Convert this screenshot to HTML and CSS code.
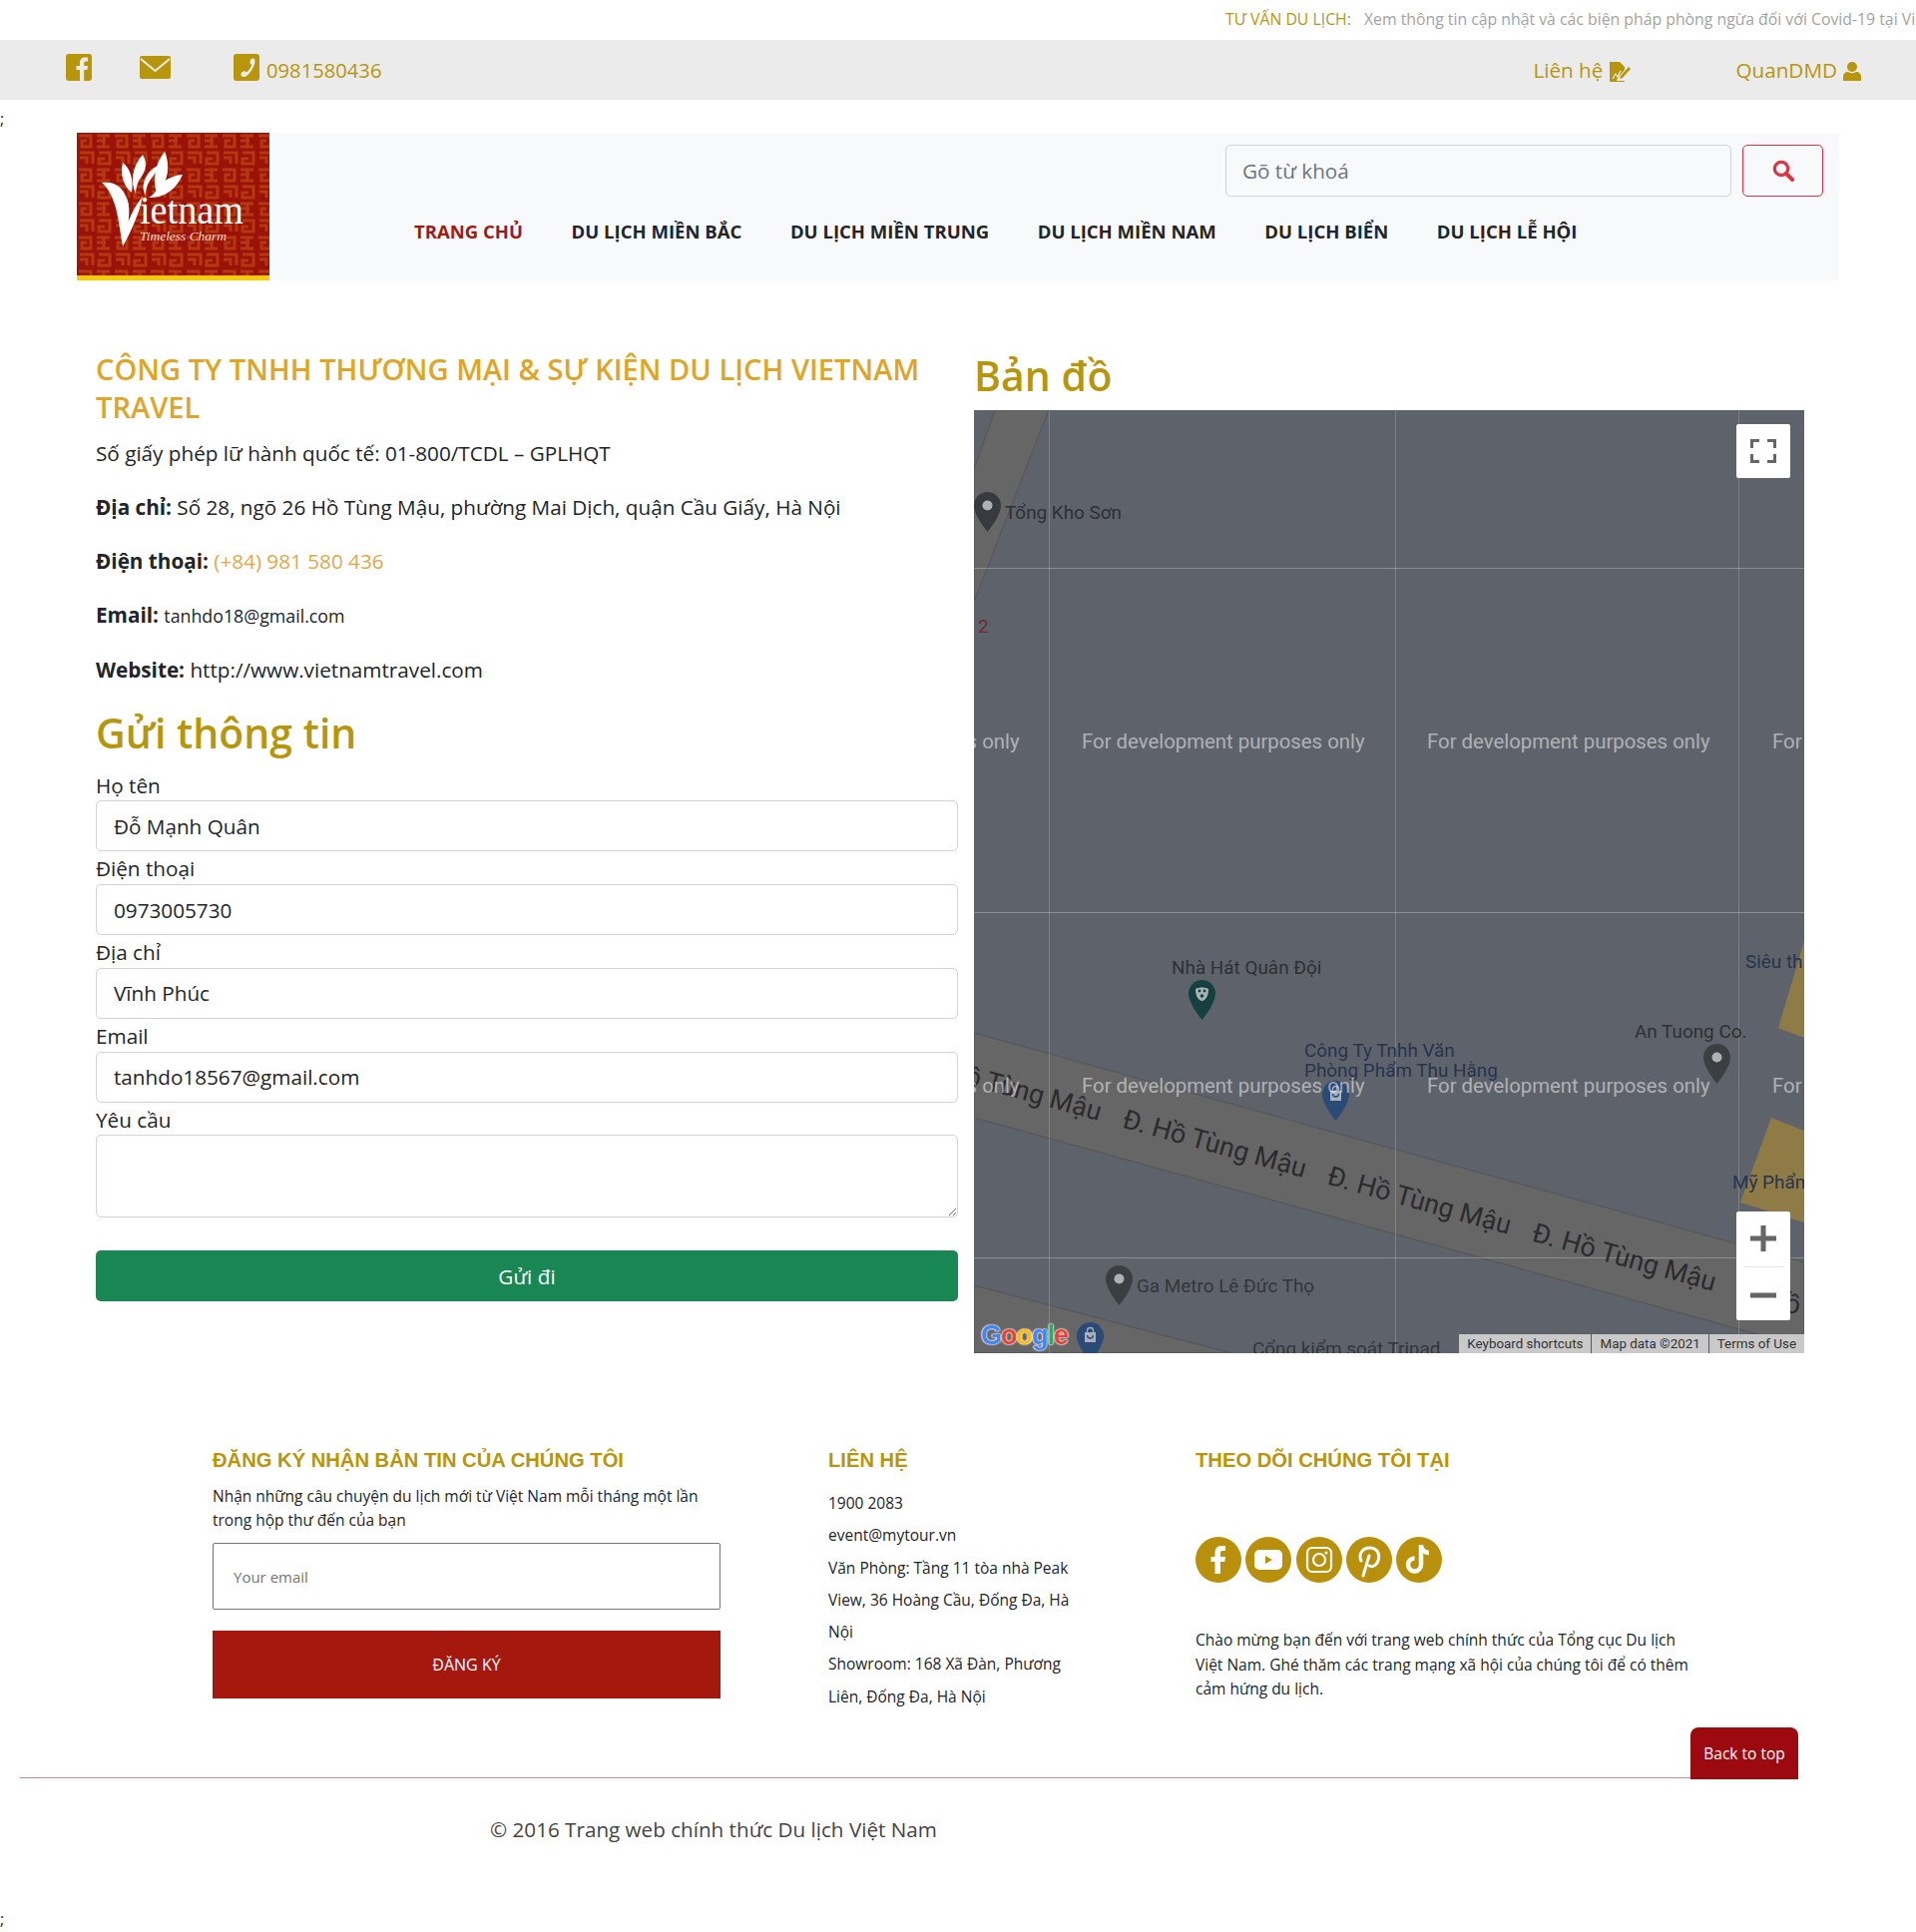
FILE: index.html
```html
<!DOCTYPE html>
<html lang="vi">

<head>
  <meta charset="UTF-8">
  <meta name="viewport" content="width=device-width, initial-scale=1.0">
  <title>Liên hệ - Du lịch Việt Nam</title>
  <link rel="stylesheet" href="styles.css">
</head>

<body>
  <svg class="defs" width="0" height="0">
    <defs>
      <symbol id="pin" viewBox="0 0 27 40">
        <path d="M13.5 0C6 0 0 6 0 13.5 0 24 13.5 40 13.5 40S27 24 27 13.5C27 6 21 0 13.5 0z" fill="currentColor" />
        <circle cx="13.5" cy="13.5" r="5" fill="#aeb1b5" />
      </symbol>
      <symbol id="pin-theatre" viewBox="0 0 27 40">
        <path d="M13.5 0C6 0 0 6 0 13.5 0 24 13.5 40 13.5 40S27 24 27 13.5C27 6 21 0 13.5 0z" fill="currentColor" />
        <path d="M7 9c4-2 9-2 13 0 0 6-2 11-6.500 12C9 20 7 15 7 9z" fill="#a9b3b3" />
        <circle cx="11" cy="11" r="1.400" fill="currentColor" />
        <circle cx="16" cy="11" r="1.400" fill="currentColor" />
        <circle cx="13.500" cy="16" r="1.800" fill="currentColor" />
      </symbol>
      <symbol id="pin-shop" viewBox="0 0 27 40">
        <path d="M13.5 0C6 0 0 6 0 13.5 0 24 13.5 40 13.5 40S27 24 27 13.5C27 6 21 0 13.5 0z" fill="currentColor" />
        <path d="M8 10h11v10H8z" fill="#a9b0bb" />
        <path d="M10.500 10V8.500a3 3 0 0 1 6 0V10M10.500 13a3 3 0 0 0 6 0" fill="none" stroke="#a9b0bb" stroke-width="1.300" />
        <path d="M10.500 13a3 3 0 0 0 6 0" fill="none" stroke="currentColor" stroke-width="1.300" />
      </symbol>
    </defs>
  </svg>

  <div class="top-strip">
    <span class="strip-label">TƯ VẤN DU LỊCH:</span>
    <span class="strip-text">Xem thông tin cập nhật và các biện pháp phòng ngừa đối với Covid-19 tại Việt Nam</span>
  </div>

  <div class="top-bar">
    <div class="bar-left">
      <svg class="icon-fb" viewBox="0 0 26 27">
        <rect width="26" height="27" rx="3" fill="#b8960c" />
        <path d="M14 27V16h-3.500v-4H14V9c0-3.500 2-5.500 5.200-5.500H22v4h-1.800c-1.500 0-2 .7-2 2V12H22l-.6 4h-3.200v11z" fill="#ebebeb" />
      </svg>
      <svg class="icon-mail" viewBox="0 0 31 23">
        <rect width="31" height="23" rx="2" fill="#b8960c" />
        <path d="M1 3l14.500 12L30 3" fill="none" stroke="#ebebeb" stroke-width="2" />
      </svg>
      <svg class="icon-phone" viewBox="0 0 26 27">
        <rect width="26" height="27" rx="3" fill="#b8960c" />
        <path d="M20 4.500c-.8 0-2.800.7-3 1.200l-.6 3.200c0 .5 1.400 1.400 1.600 2 .1 1.500-3.500 7-5 7.400-.7 0-1.700-1.200-2.200-1.200l-3 1.600c-.4.400-.4 2.500 0 3.200C9 23.500 11 23.300 12.500 22.400 17 19.600 21.500 12 21.500 7c0-1-.6-2.500-1.500-2.500z" fill="#ebebeb" />
      </svg>
      <span class="bar-phone">0981580436</span>
    </div>
    <div class="bar-right">
      <a class="bar-link bar-contact">Liên hệ
        <svg class="icon-edit" viewBox="0 0 22 20">
          <path d="M1 0h10l5 5v3l-7 8-1 3h8v1H1z" fill="#b8960c" />
          <path d="M4 17l3-5 2 3 3-6" fill="none" stroke="#ebebeb" stroke-width="1.200" />
          <path d="M12 14l8-9 2 2-8 9-3 1z" fill="#b8960c" />
        </svg>
      </a>
      <a class="bar-link bar-user">QuanDMD
        <svg class="icon-user" viewBox="0 0 18 19">
          <circle cx="9" cy="5" r="5" fill="#b8960c" />
          <path d="M0 19v-4c0-3 2-5 5-5 2.500 1.600 5.500 1.600 8 0 3 0 5 2 5 5v4z" fill="#b8960c" />
        </svg>
      </a>
    </div>
  </div>

  <div class="stray">;</div>

  <header class="site-header">
    <svg class="logo" viewBox="0 0 193 148" role="img" aria-label="Vietnam Timeless Charm">
      <defs>
        <pattern id="key" width="36" height="34" patternUnits="userSpaceOnUse">
          <path d="M2 3h12v11H5V8h5M20 3h13M20 8h9M20 14h13M27 3v11M3 20h13v11M3 25h7v6M22 20h11v11H22v-5h6" fill="none" stroke="#b6380f" stroke-width="3" />
        </pattern>
      </defs>
      <rect width="193" height="148" fill="#9a1208" />
      <rect width="193" height="143" fill="url(#key)" />
      <rect y="143" width="193" height="5" fill="#fbca00" />
      <path d="M46 30c8 6 11 18 9 30-8-6-12-18-9-30zM66 22c6 10 2 18-4 26-2 5-3 9-3 13-6-12-3-28 7-39zM81 33c-2 12-12 14-12 30-6-10 0-24 12-30zM88 19c6 14 4 30-8 42-4-14-2-30 8-42zM106 42c-6 14-18 24-34 23 8-4 10-14 18-18 5-3 11-5 16-5z" fill="#fff" />
      <path d="M25 50c14-2 22 6 26 18 3 10 1 26-5 46-3-16-4-30-8-42-3-9-7-17-13-22zM46 114c2-18 8-36 20-50-4 18-12 36-20 50z" fill="#fff" />
      <text class="logo-name" x="63" y="91" textLength="104" lengthAdjust="spacingAndGlyphs">ietnam</text>
      <text class="logo-tag" x="63" y="108" textLength="87" lengthAdjust="spacingAndGlyphs">Timeless Charm</text>
    </svg>
    <div class="header-right">
      <form class="search-row">
        <input class="search-input" type="text" placeholder="Gõ từ khoá">
        <button class="search-btn" type="button">
          <svg viewBox="0 0 22 22" width="22" height="22">
            <circle cx="9" cy="9" r="6.700" fill="none" stroke="#dc3545" stroke-width="3.200" />
            <path d="M14 14l6 6" stroke="#dc3545" stroke-width="4" stroke-linecap="round" />
          </svg>
        </button>
      </form>
      <nav class="main-nav">
        <a class="nav-item nav-active">TRANG CHỦ</a>
        <a class="nav-item">DU LỊCH MIỀN BẮC</a>
        <a class="nav-item">DU LỊCH MIỀN TRUNG</a>
        <a class="nav-item">DU LỊCH MIỀN NAM</a>
        <a class="nav-item">DU LỊCH BIỂN</a>
        <a class="nav-item">DU LỊCH LỄ HỘI</a>
      </nav>
    </div>
  </header>

  <main class="contact-grid">
    <section class="contact-left">
      <h2 class="company">CÔNG TY TNHH THƯƠNG MẠI &amp; SỰ KIỆN DU LỊCH VIETNAM TRAVEL</h2>
      <p>Số giấy phép lữ hành quốc tế: 01-800/TCDL – GPLHQT</p>
      <p><b>Địa chỉ:</b> Số 28, ngõ 26 Hồ Tùng Mậu, phường Mai Dịch, quận Cầu Giấy, Hà Nội</p>
      <p><b>Điện thoại:</b> <a class="phone-link">(+84) 981 580 436</a></p>
      <p><b>Email:</b> <span class="small-mail">tanhdo18@gmail.com</span></p>
      <p><b>Website:</b> http://www.vietnamtravel.com</p>

      <h1 class="page-title">Gửi thông tin</h1>
      <form class="send-form">
        <label>Họ tên</label>
        <input type="text" value="Đỗ Mạnh Quân">
        <label>Điện thoại</label>
        <input type="text" value="0973005730">
        <label>Địa chỉ</label>
        <input type="text" value="Vĩnh Phúc">
        <label>Email</label>
        <input type="text" value="tanhdo18567@gmail.com">
        <label>Yêu cầu</label>
        <textarea></textarea>
        <button class="send-btn" type="button">Gửi đi</button>
      </form>
    </section>

    <section class="contact-right">
      <h1 class="page-title map-title">Bản đồ</h1>
      <div class="map">
        <svg class="map-bg" viewBox="0 0 832 945" width="832" height="945">
          <g fill="#666667" stroke="#58595c" stroke-width="1.500">
            <path d="M21 0H75L0 192V59z" />
            <path d="M0 624L832 854V939L0 709z" />
            <path d="M0 877L258 945H0z" />
          </g>
          <g fill="#8f7b45">
            <path d="M832 532L806 619L832 629z" />
            <path d="M799 709L768 794L832 814V722z" />
          </g>
          <g stroke="#fff" stroke-opacity=".2">
            <path d="M75.500 0V945M422.500 0V945M766.500 0V945" />
            <path d="M0 158.500H832M0 503.500H832M0 849.500H832" stroke-opacity=".28" />
          </g>
        </svg>

        <div class="road-labels">
          <span>Đ. Hồ Tùng Mậu</span>
          <span>Đ. Hồ Tùng Mậu</span>
          <span>Đ. Hồ Tùng Mậu</span>
          <span>Đ. Hồ Tùng Mậu</span>
          <span>Đ. Hồ Tùng Mậu</span>
        </div>

        <svg class="pin pin-kho"><use href="#pin" /></svg>
        <span class="poi poi-kho">Tổng Kho Sơn</span>
        <span class="poi poi-two">2</span>
        <span class="poi poi-nha">Nhà Hát Quân Đội</span>
        <svg class="pin pin-nha"><use href="#pin-theatre" /></svg>
        <span class="poi poi-cty">Công Ty Tnhh Văn<br>Phòng Phẩm Thu Hằng</span>
        <svg class="pin pin-cty"><use href="#pin-shop" /></svg>
        <span class="poi poi-an">An Tuong Co.</span>
        <svg class="pin pin-an"><use href="#pin" /></svg>
        <span class="poi poi-sieu">Siêu th</span>
        <span class="poi poi-my">Mỹ Phẩm</span>
        <svg class="pin pin-ga"><use href="#pin" /></svg>
        <span class="poi poi-ga">Ga Metro Lê Đức Thọ</span>
        <span class="poi poi-cong">Cổng kiểm soát Trinad</span>
        <svg class="pin pin-bag"><use href="#pin-shop" /></svg>

        <div class="dev-row dev-row-1">
          <span>For development purposes only</span>
          <span>For development purposes only</span>
          <span>For development purposes only</span>
          <span>For development purposes only</span>
        </div>
        <div class="dev-row dev-row-2">
          <span>For development purposes only</span>
          <span>For development purposes only</span>
          <span>For development purposes only</span>
          <span>For development purposes only</span>
        </div>

        <button class="map-btn map-full" type="button">
          <svg viewBox="0 0 26 24" width="26" height="24">
            <path d="M1.500 9V1.500H9M17 1.500h7.500V9M1.500 15v7.500H9M17 22.500h7.500V15" fill="none" stroke="#666" stroke-width="3" />
          </svg>
        </button>
        <div class="map-btn map-zoom">
          <svg class="zoom-sign" viewBox="0 0 26 26" width="26" height="26">
            <path d="M13 0V26M0 13H26" stroke="#666" stroke-width="5" />
          </svg>
          <i class="zoom-line"></i>
          <svg class="zoom-sign" viewBox="0 0 26 26" width="26" height="26">
            <path d="M0 13H26" stroke="#666" stroke-width="5" />
          </svg>
        </div>
        <div class="google"><span class="g-b">G</span><span class="g-r">o</span><span class="g-y">o</span><span class="g-b">g</span><span class="g-g">l</span><span class="g-r">e</span></div>
        <div class="attribution">
          <span>Keyboard shortcuts</span>
          <span>Map data ©2021</span>
          <span>Terms of Use</span>
        </div>
      </div>
    </section>
  </main>

  <footer class="site-footer">
    <div class="footer-cols">
      <div class="col-news">
        <h4>ĐĂNG KÝ NHẬN BẢN TIN CỦA CHÚNG TÔI</h4>
        <p class="news-text">Nhận những câu chuyện du lịch mới từ Việt Nam mỗi tháng một lần trong hộp thư đến của bạn</p>
        <input class="news-input" type="text" placeholder="Your email">
        <button class="news-btn" type="button">ĐĂNG KÝ</button>
      </div>
      <div class="col-contact">
        <h4>LIÊN HỆ</h4>
        <p>1900 2083</p>
        <p>event@mytour.vn</p>
        <p>Văn Phòng: Tầng 11 tòa nhà Peak View, 36 Hoàng Cầu, Đống Đa, Hà Nội</p>
        <p>Showroom: 168 Xã Đàn, Phương Liên, Đống Đa, Hà Nội</p>
      </div>
      <div class="col-follow">
        <h4>THEO DÕI CHÚNG TÔI TẠI</h4>
        <div class="socials">
          <svg viewBox="0 0 46 46">
            <circle cx="23" cy="23" r="23" fill="#b8900b" />
            <path d="M19.500 37V25h-4v-5h4v-4c0-4.500 2.500-7 6.500-7h4v5h-3c-1.600 0-2 .8-2 2.200V20h5l-.8 5h-4.200v12z" fill="#fff" />
          </svg>
          <svg viewBox="0 0 46 46">
            <circle cx="23" cy="23" r="23" fill="#b8900b" />
            <rect x="9" y="13" width="28" height="20" rx="5" fill="#fff" />
            <path d="M20 19l7 4-7 4z" fill="#b8900b" />
          </svg>
          <svg viewBox="0 0 46 46">
            <circle cx="23" cy="23" r="23" fill="#b8900b" />
            <rect x="11" y="11" width="24" height="24" rx="5" fill="none" stroke="#fff" stroke-width="2.200" />
            <circle cx="23" cy="23" r="6" fill="none" stroke="#fff" stroke-width="2.200" />
            <circle cx="30" cy="16" r="1.500" fill="#fff" />
          </svg>
          <svg viewBox="0 0 46 46">
            <circle cx="23" cy="23" r="23" fill="#b8900b" />
            <path d="M17 39l6-20M15 24c-3-6 1-13 8.500-13 7 0 10 5 9 11-1 6-5.500 9-9.500 7" fill="none" stroke="#fff" stroke-width="3" stroke-linecap="round" />
          </svg>
          <svg viewBox="0 0 46 46">
            <circle cx="23" cy="23" r="23" fill="#b8900b" />
            <path d="M25 8v20a6.500 6.500 0 1 1-6.500-6.500M25 9c.5 4 4 7 8 7" fill="none" stroke="#fff" stroke-width="4.500" />
          </svg>
        </div>
        <p class="follow-text">Chào mừng bạn đến với trang web chính thức của Tổng cục Du lịch Việt Nam. Ghé thăm các trang mạng xã hội của chúng tôi để có thêm cảm hứng du lịch.</p>
      </div>
    </div>
    <div class="footer-rule">
      <a class="back-top">Back to top</a>
    </div>
    <div class="copyright">© 2016 Trang web chính thức Du lịch Việt Nam</div>
  </footer>
  <div class="stray stray-end">;</div>
</body>

</html>
```
FILE: styles.css
```css
* {
  box-sizing: border-box;
}

body {
  margin: 0;
  background: #fff;
  color: #212529;
  font-family: "Open Sans", "Liberation Sans", sans-serif;
  font-size: 20.700px;
  line-height: 30px;
}

.defs {
  position: absolute;
}

/* top strip */
.top-strip {
  height: 40px;
  padding-left: 1228px;
  display: flex;
  gap: 13px;
  overflow: hidden;
  white-space: nowrap;
  font-size: 15.800px;
  line-height: 39px;
}

.strip-label {
  color: #b8960c;
}

.strip-text {
  color: #a3a3a3;
}

.top-bar {
  height: 60px;
  background: #ebebeb;
  display: flex;
  justify-content: space-between;
  color: #b8960c;
}

.bar-left {
  display: flex;
  align-items: flex-start;
  padding-left: 66px;
}

.icon-fb {
  width: 26px;
  height: 27px;
  margin-top: 14px;
}

.icon-mail {
  width: 31px;
  height: 23px;
  margin: 16px 0 0 48px;
}

.icon-phone {
  width: 26px;
  height: 27px;
  margin: 14px 0 0 63px;
}

.bar-phone {
  margin-left: 7px;
  font-size: 20.200px;
  line-height: 61px;
}

.bar-right {
  display: flex;
  padding-right: 55px;
  line-height: 61px;
}

.bar-link {
  display: flex;
  align-items: flex-start;
  gap: 6px;
}

.bar-contact {
  margin-right: 105px;
}

.icon-edit {
  width: 22px;
  height: 20px;
  margin-top: 22px;
}

.icon-user {
  width: 18px;
  height: 19px;
  margin-top: 22px;
}

.stray {
  height: 33px;
  font-size: 16px;
  line-height: 38px;
}

/* header */
.site-header {
  height: 148px;
  margin: 0 77px;
  background: #f8f9fa;
  display: flex;
}

.logo {
  width: 193px;
  height: 148px;
  flex: none;
}

.logo-name {
  fill: #fff;
  font-family: "Liberation Serif", serif;
  font-size: 40px;
}

.logo-tag {
  fill: #f3d9d2;
  font-family: "Liberation Serif", serif;
  font-style: italic;
  font-size: 13px;
}

.header-right {
  flex: 1;
}

.search-row {
  display: flex;
  justify-content: flex-end;
  gap: 11px;
  padding: 12px 16px 0 0;
}

.search-input {
  width: 507px;
  height: 52px;
  padding: 0 16px;
  background: #f8f9fa;
  border: 1px solid #ced4da;
  border-radius: 5px;
  color: #212529;
  font: inherit;
}

.search-input::placeholder {
  color: #6c757d;
}

.search-btn {
  width: 81px;
  height: 52px;
  padding: 3px 0 0;
  background: transparent;
  border: 1px solid #dc3545;
  border-radius: 5px;
}

.main-nav {
  display: flex;
  gap: 48.500px;
  margin-top: 21px;
  padding-left: 145px;
  font-size: 18.550px;
  font-weight: 700;
  line-height: 28px;
}

.nav-active {
  color: #a5180e;
}

/* contact */
.contact-grid {
  display: grid;
  grid-template-columns: 864px 832px;
  gap: 16px;
  margin-top: 70px;
  padding-left: 96px;
}

.company {
  margin: 0 0 12px;
  color: #e0a526;
  font-size: 29.050px;
  font-weight: 600;
  line-height: 38px;
}

.contact-left p {
  margin: 0 0 24px;
}

.phone-link {
  color: #e0a94a;
}

.small-mail {
  font-size: 17.800px;
}

.page-title {
  margin: 0 0 11.500px;
  color: #b8960c;
  font-size: 41px;
  font-weight: 600;
  line-height: 48px;
}

.map-title {
  margin: 1px 0 11px;
}

.send-form label {
  display: block;
  height: 32.750px;
  line-height: 35px;
}

.send-form input,
.send-form textarea {
  display: block;
  width: 100%;
  height: 51px;
  padding: 0 17px;
  border: 1px solid #ced4da;
  border-radius: 5px;
  color: #212529;
  font: inherit;
}

.send-form textarea {
  height: 83px;
}

.send-btn {
  display: block;
  width: 100%;
  height: 51px;
  margin-top: 33px;
  background: #198754;
  border: 0;
  border-radius: 5px;
  color: #fff;
  font: inherit;
}

/* map */
.map {
  position: relative;
  width: 832px;
  height: 945px;
  overflow: hidden;
  background: #5e636b;
  font-family: Roboto, "Liberation Sans", sans-serif;
}

.map-bg {
  position: absolute;
  left: 0;
  top: 0;
}

.road-labels {
  position: absolute;
  left: -86px;
  top: 777px;
  display: flex;
  color: #2b2b2c;
  font-size: 26.800px;
  transform: rotate(15.500deg);
  white-space: nowrap;
}

.road-labels span {
  flex: 0 0 213px;
  text-align: center;
}

.poi {
  position: absolute;
  color: #2d3034;
  font-size: 18.900px;
  line-height: 20px;
  white-space: nowrap;
}

.pin {
  position: absolute;
  width: 27px;
  height: 40px;
  color: #373a3e;
}

.pin-kho { left: 0; top: 82px; }
.poi-kho { left: 31px; top: 93px; }
.poi-two { left: 4px; top: 207px; color: #6a2a30; }
.poi-nha { left: 198px; top: 549px; }
.pin-nha { left: 215px; top: 571px; color: #15403f; }
.poi-cty { left: 331px; top: 632px; color: #27344d; }
.pin-cty { left: 349px; top: 672px; color: #2b4a75; }
.poi-an { left: 662px; top: 613px; }
.pin-an { left: 731px; top: 635px; color: #3c3f42; }
.poi-sieu { left: 773px; top: 543px; color: #27344d; }
.poi-my { left: 760px; top: 764px; color: #27344d; }
.pin-ga { left: 132px; top: 857px; color: #3c3f42; }
.poi-ga { left: 163px; top: 868px; color: #33363a; }
.poi-cong { left: 279px; top: 931px; color: #33363a; }
.pin-bag { left: 103px; top: 914px; color: #2b4a75; }

.dev-row {
  position: absolute;
  left: -238px;
  display: flex;
  color: rgba(255, 255, 255, .5);
  font-size: 20.350px;
  line-height: 24px;
  white-space: nowrap;
}

.dev-row span {
  flex: 0 0 346px;
}

.dev-row-1 { top: 320px; }
.dev-row-2 { top: 665px; }

.map-btn {
  position: absolute;
  right: 14px;
  width: 54px;
  background: #fff;
  border: 0;
  border-radius: 2px;
}

.map-full {
  top: 14px;
  height: 54px;
  padding: 3px 0 0;
}

.map-zoom {
  top: 803px;
  height: 109px;
  display: flex;
  flex-direction: column;
  align-items: center;
  padding-top: 14px;
}

.zoom-line {
  width: 41px;
  height: 1px;
  margin: 15px 0;
  background: #e6e6e6;
  flex: none;
}

.zoom-sign {
  flex: none;
}

.google {
  position: absolute;
  left: 7px;
  top: 912px;
  font-family: "Liberation Sans", sans-serif;
  font-size: 27px;
  font-weight: 700;
  line-height: 30px;
  letter-spacing: -1px;
  text-shadow: 0 0 2px #fff, 0 0 2px #fff, 0 0 1px #fff;
}

.g-b { color: #4285f4; }
.g-r { color: #ea4335; }
.g-y { color: #fbbc05; }
.g-g { color: #34a853; }

.attribution {
  position: absolute;
  right: 0;
  bottom: 0;
  height: 19px;
  display: flex;
  gap: 1px;
  background: #55585d;
  color: #333;
  font-size: 13.400px;
  line-height: 19px;
  white-space: nowrap;
}

.attribution span {
  padding: 0 8px;
  background: #c9c9ca;
}

/* footer */
.site-footer {
  margin-top: 92px;
}

.footer-cols {
  display: flex;
  gap: 108px;
  padding-left: 213px;
  font-size: 15.500px;
}

.footer-cols h4 {
  margin: 1px 0 -1px;
  color: #b8960c;
  font-family: "Liberation Sans", sans-serif;
  font-size: 20.200px;
  font-weight: 700;
  line-height: 28px;
}

.col-news {
  width: 509px;
}

.news-text {
  margin: 11px 0;
  line-height: 24px;
}

.news-input {
  display: block;
  width: 100%;
  height: 67px;
  padding: 0 20px;
  border: 1px solid #767676;
  border-radius: 2px;
  font: inherit;
  font-size: 15px;
}

.news-btn {
  display: block;
  width: 100%;
  height: 68px;
  margin-top: 21px;
  background: #a5180e;
  border: 0;
  color: #fff;
  font: inherit;
  font-size: 16px;
}

.col-contact {
  width: 260px;
}

.col-contact h4 {
  margin-bottom: 13px;
}

.col-contact p {
  margin: 0;
  line-height: 32.300px;
}

.col-follow {
  width: 500px;
}

.socials {
  display: flex;
  gap: 4.300px;
  margin-top: 64px;
}

.socials svg {
  width: 46px;
  height: 46px;
}

.follow-text {
  margin: 45px 0 0;
  line-height: 24.500px;
}

.footer-rule {
  position: relative;
  height: 1px;
  margin: 65px 118px 0 20px;
  background: #c98a8a;
}

.back-top {
  position: absolute;
  right: 0;
  bottom: -1px;
  width: 108px;
  height: 52px;
  background: #9c0a10;
  border-radius: 8px 8px 0 0;
  color: #fff;
  font-size: 15.500px;
  line-height: 52px;
  text-align: center;
}

.copyright {
  margin-top: 35px;
  padding-left: 491px;
  font-size: 20.650px;
  line-height: 32px;
  color: #444;
}

.stray-end {
  height: 24px;
  margin-top: 62px;
  line-height: 24px;
}
```
